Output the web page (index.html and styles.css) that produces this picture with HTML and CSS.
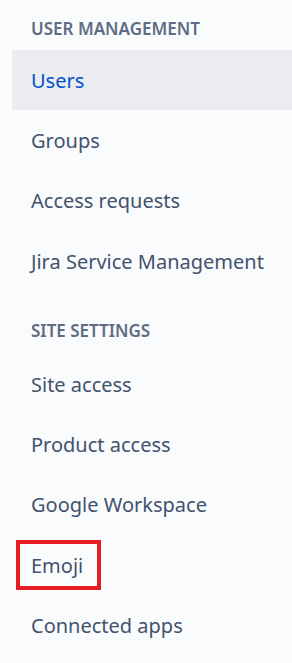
FILE: index.html
```html
<!DOCTYPE html>
<html>
<head>
<meta charset="utf-8">
<title>Admin navigation</title>
<link rel="stylesheet" href="styles.css">
</head>
<body>
<nav class="sidenav">
  <div class="group-title first">User management</div>
  <a class="item active" href="#">Users</a>
  <a class="item" href="#">Groups</a>
  <a class="item" href="#">Access requests</a>
  <a class="item" href="#">Jira Service Management</a>

  <div class="group-title">Site settings</div>
  <a class="item" href="#">Site access</a>
  <a class="item" href="#">Product access</a>
  <a class="item" href="#">Google Workspace</a>
  <a class="item" href="#"><span class="mark"></span>Emoji</a>
  <a class="item" href="#">Connected apps</a>
</nav>
</body>
</html>
```

FILE: styles.css
```css
body {
  margin: 0;
  background: #fafbfc;
  font-family: "Noto Sans", "Open Sans", sans-serif;
}

.sidenav {
  display: flex;
  flex-direction: column;
  padding-left: 12px;
}

.group-title {
  font-size: 17px;
  font-weight: 600;
  line-height: 20px;
  text-transform: uppercase;
  color: #5e6c84;
  padding: 30px 0 13px 19px;
}

.group-title.first {
  padding-top: 19px;
  padding-bottom: 11px;
}

.item {
  position: relative;
  display: flex;
  align-items: center;
  height: 60.3px;
  padding-left: 19px;
  font-size: 20px;
  color: #42526e;
  text-decoration: none;
  border-radius: 3px 0 0 3px;
}

.item.active {
  background: #ebecf0;
  color: #0052cc;
}

/* red annotation box */
.mark {
  position: absolute;
  left: 4px;
  top: 5px;
  width: 77px;
  height: 42px;
  border: 4px solid #e51c23;
}
```
